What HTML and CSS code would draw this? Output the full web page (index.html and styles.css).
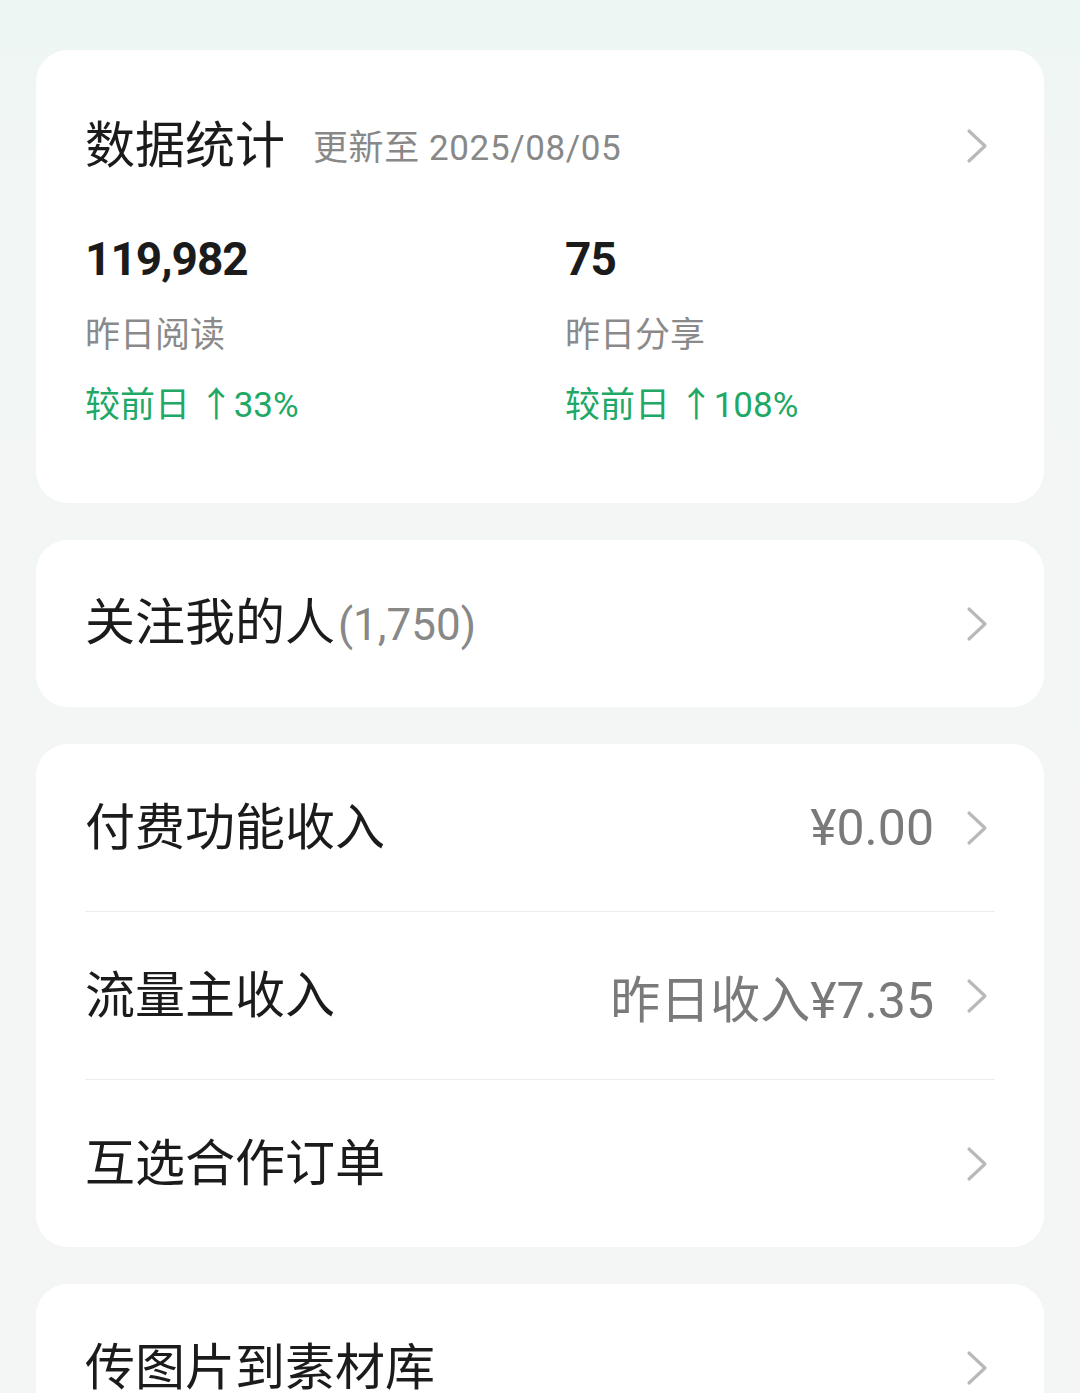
FILE: index.html
```html
<!DOCTYPE html>
<html lang="zh-CN">
<head>
    <meta charset="UTF-8">
    <meta name="viewport" content="width=device-width, initial-scale=1.0">
    <title>数据统计</title>
    <link rel="stylesheet" href="styles.css">
</head>
<body>

    <!-- 数据统计 -->
    <div class="card stats-card">
        <div class="stats-head">
            <span class="title">数据统计</span>
            <span class="sub">更新至 2025/08/05</span>
            <svg class="chevron" viewBox="0 0 22 36"><path d="M3 3 L19 18 L3 33"/></svg>
        </div>
        <div class="stats-grid">
            <div class="stat">
                <div class="num">119,982</div>
                <div class="label">昨日阅读</div>
                <div class="trend">较前日 ↑33%</div>
            </div>
            <div class="stat">
                <div class="num">75</div>
                <div class="label">昨日分享</div>
                <div class="trend">较前日 ↑108%</div>
            </div>
        </div>
    </div>

    <!-- 关注 -->
    <div class="card">
        <div class="row">
            <span class="title">关注我的人<span class="count">(1,750)</span></span>
            <svg class="chevron" viewBox="0 0 22 36"><path d="M3 3 L19 18 L3 33"/></svg>
        </div>
    </div>

    <!-- 收入 -->
    <div class="card">
        <div class="row">
            <span class="title">付费功能收入</span>
            <span class="value">¥0.00</span>
            <svg class="chevron" viewBox="0 0 22 36"><path d="M3 3 L19 18 L3 33"/></svg>
        </div>
        <div class="row">
            <span class="title">流量主收入</span>
            <span class="value">昨日收入¥7.35</span>
            <svg class="chevron" viewBox="0 0 22 36"><path d="M3 3 L19 18 L3 33"/></svg>
        </div>
        <div class="row">
            <span class="title">互选合作订单</span>
            <svg class="chevron" viewBox="0 0 22 36"><path d="M3 3 L19 18 L3 33"/></svg>
        </div>
    </div>

    <div class="card">
        <div class="row">
            <span class="title">传图片到素材库</span>
            <svg class="chevron" viewBox="0 0 22 36"><path d="M3 3 L19 18 L3 33"/></svg>
        </div>
    </div>

</body>
</html>
```

FILE: styles.css
```css
html {
    background: #f4f6f5;
}
body {
    margin: 0;
    padding: 50px 36px 0;
    font-family: Roboto, "Noto Sans CJK SC", sans-serif;
    color: #1b1b1b;
    background: linear-gradient(180deg, #edf6f3 0px, #f2f6f5 180px, #f4f6f5 100%);
    min-height: 100vh;
    box-sizing: border-box;
    display: flex;
    flex-direction: column;
    gap: 37px;
}
.card {
    background: #fff;
    border-radius: 32px;
    padding: 0 49px;
}
.title {
    font-size: 50px;
    line-height: 60px;
    white-space: nowrap;
}
.chevron {
    width: 22px;
    height: 36px;
    flex: none;
    margin-left: auto;
    margin-right: 7px;
}
.chevron path {
    fill: none;
    stroke: #b9b9b9;
    stroke-width: 3.2;
    stroke-linecap: round;
    stroke-linejoin: round;
}

/* 数据统计 */
.stats-card {
    padding-top: 66px;
    padding-bottom: 73px;
}
.stats-head {
    display: flex;
    align-items: center;
}
.stats-head .sub {
    font-size: 35px;
    letter-spacing: 0.6px;
    color: #888;
    margin-left: 28px;
    margin-top: -4px;
}
.stats-grid {
    display: grid;
    grid-template-columns: 480px 1fr;
    margin-top: 56px;
}
.stat .num {
    font-size: 46px;
    font-weight: 700;
    line-height: 54px;
    letter-spacing: -1px;
}
.stat .label {
    font-size: 35px;
    color: #8a8a8a;
    line-height: 48px;
    margin-top: 26px;
}
.stat .trend {
    font-size: 35px;
    color: #20a866;
    line-height: 48px;
    margin-top: 22px;
}

/* 列表行 */
.row {
    display: flex;
    align-items: center;
    height: 167px;
    border-top: 1px solid #ececec;
}
.row:first-child {
    border-top: none;
}
.count {
    font-size: 44px;
    color: #888;
    margin-left: 3px;
}
.value {
    margin-left: auto;
    font-size: 50px;
    color: #7a7a7a;
    white-space: nowrap;
}
.value + .chevron {
    margin-left: 32px;
}
```
